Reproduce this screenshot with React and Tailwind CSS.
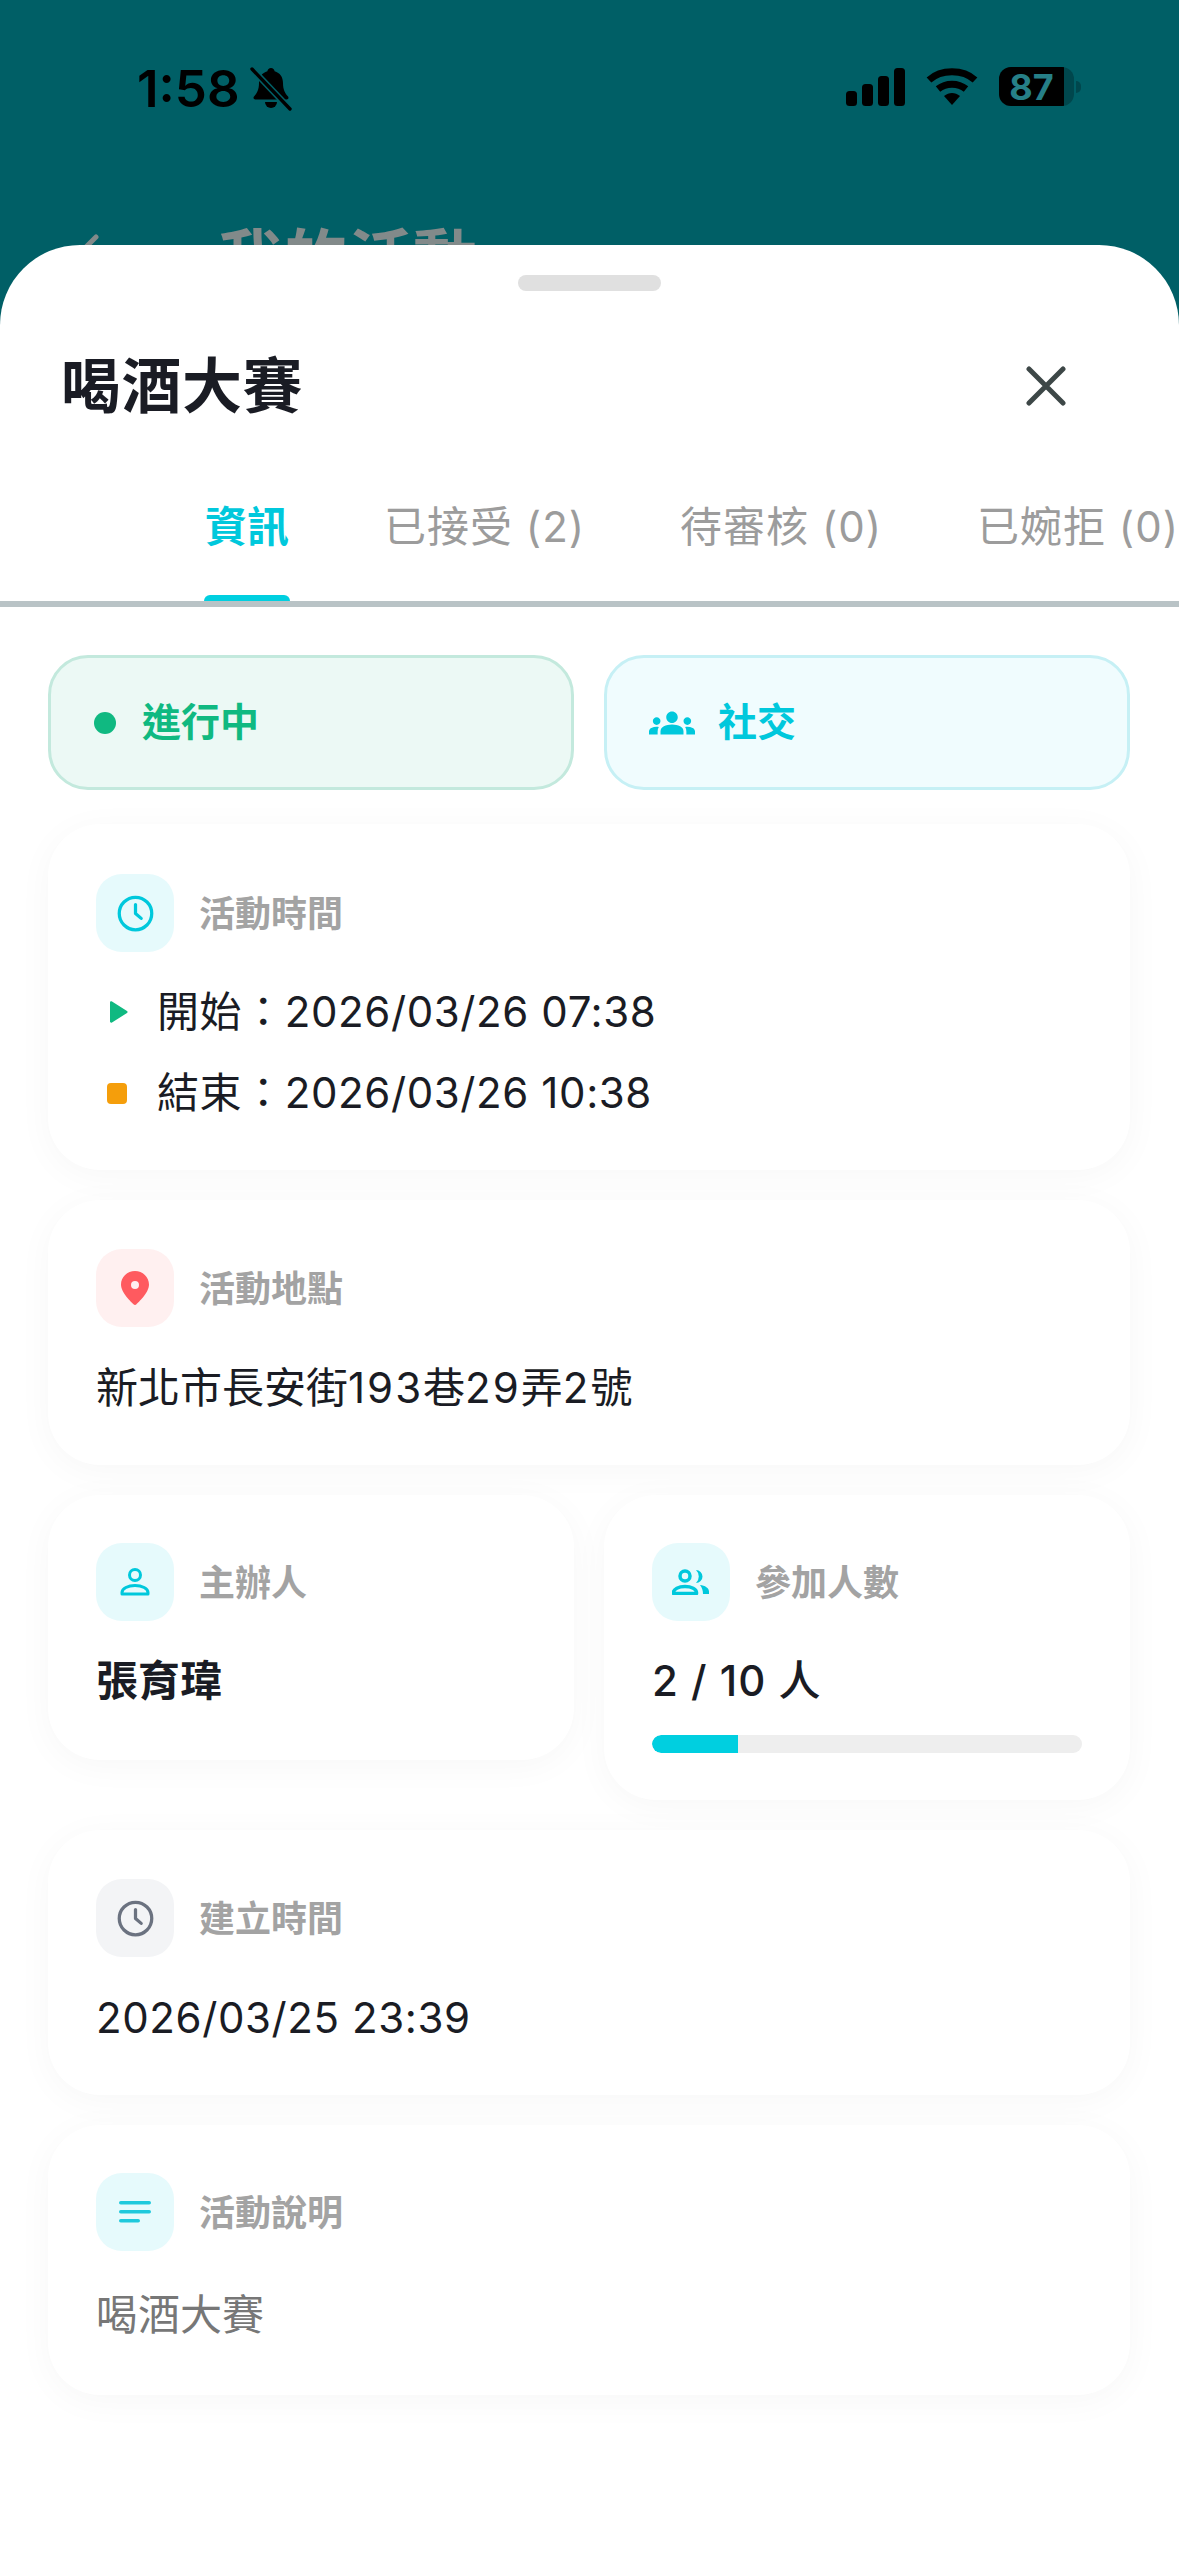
import React from "react";

const FONT = "font-['Inter','Noto_Sans_CJK_TC',sans-serif]";

function Clock({ color, size = 39 }) {
  return (
    <svg width={size} height={size} viewBox="0 0 24 24" fill="none" stroke={color} strokeWidth="2" strokeLinecap="round" strokeLinejoin="round">
      <circle cx="12" cy="12" r="10" />
      <path d="M12 6.500V12l3.500 3" />
    </svg>
  );
}

function IconBox({ bg, children }) {
  return (
    <div className={`w-[78px] h-[78px] rounded-[26px] flex items-center justify-center shrink-0 ${bg}`}>{children}</div>
  );
}

function CardHead({ bg, icon, label }) {
  return (
    <div className="flex items-center gap-[25px]">
      <IconBox bg={bg}>{icon}</IconBox>
      <span className="pt-[2px] text-[36px] leading-[50px] font-semibold text-[#a3a3a3]">{label}</span>
    </div>
  );
}

function Card({ className = "", children }) {
  return (
    <div className={`bg-white rounded-[52px] px-[48px] shadow-[0_6px_36px_rgba(0,0,0,0.035)] ${className}`}>{children}</div>
  );
}

export default function App() {
  return (
    <div className={`w-[1179px] h-[2556px] overflow-hidden flex flex-col bg-[#005f66] ${FONT}`}>
      <div className="h-[245px] shrink-0 overflow-hidden relative">
        <div className="flex justify-between items-start pt-[67px] pl-[137px] pr-[98px]">
          <div className="flex items-center gap-[10px]">
            <span className="text-[51px] leading-[40px] font-semibold text-black">1:58</span>
            <svg width="42" height="44" viewBox="0 0 42 44" fill="black">
              <path d="M21 1c-2 0-3.400 1.400-3.600 3.200C12 5.700 9 10 9 16c0 6.500-2 10.500-5 13.500-1 1.200-.4 3 1.500 3h31c1.900 0 2.500-1.800 1.500-3-3-3-5-7-5-13.500 0-6-3-10.300-8.400-11.800C24.400 2.400 23 1 21 1z" />
              <path d="M15 35h12a6 6 0 0 1-12 0z" />
              <path d="M1 1l39 41" stroke="#005f66" strokeWidth="6.500" />
              <path d="M2 2l38 40" stroke="black" strokeWidth="3.400" strokeLinecap="round" />
            </svg>
          </div>
          <div className="flex items-center">
            <svg width="59" height="38" viewBox="0 0 59 38" fill="black" className="mr-[21px]">
              <rect x="0" y="23" width="11" height="15" rx="3.500" />
              <rect x="16" y="16" width="11" height="22" rx="3.500" />
              <rect x="32" y="8" width="11" height="30" rx="3.500" />
              <rect x="48" y="0" width="11" height="38" rx="3.500" />
            </svg>
            <svg width="52" height="38" viewBox="0 0 52 38" fill="none" stroke="black" className="mr-[21px]">
              <path d="M3 12C15 1 37 1 49 12" strokeWidth="7" />
              <path d="M12 21c8-6.500 20-6.500 28 0" strokeWidth="7" />
              <path d="M18 28c5-4 11-4 16 0l-8 9z" fill="black" stroke="none" />
            </svg>
            <div className="relative w-[75px] h-[39px] rounded-[12px] bg-[#00474d] overflow-hidden flex">
              <div className="w-[65px] h-full bg-black flex items-center justify-center text-[36px] leading-none font-bold text-[#267f87]">87</div>
            </div>
            <div className="w-[5px] h-[12px] ml-[2px] rounded-r-full bg-[#00474d]" />
          </div>
        </div>
        <div className="absolute left-[74px] top-[233px] flex items-start gap-[118px] text-[#828a8a]">
          <svg width="26" height="44" viewBox="0 0 26 44" fill="none" stroke="currentColor" strokeWidth="5" strokeLinecap="round"><path d="M22 4L4 22l18 18" /></svg>
          <span className="text-[65px] leading-[64px] font-bold -mt-[5px]">我的活動</span>
        </div>
      </div>

      <div className="flex-1 bg-white rounded-t-[80px] flex flex-col relative">
        <div className="w-[143px] h-[16px] rounded-full bg-[#e0e0e0] self-center mt-[30px]" />
        <div className="flex items-center justify-between mt-[65px] pl-[61px] pr-[113px]">
          <span className="text-[60px] leading-[60px] font-bold text-[#1a1c24] tracking-[0.5px]">喝酒大賽</span>
          <svg width="40" height="40" viewBox="0 0 40 40" fill="none" stroke="#3d4747" strokeWidth="5" strokeLinecap="round"><path d="M3 3l34 34M37 3L3 37" /></svg>
        </div>
        <div className="mt-[86px] pl-[205px] flex gap-[95px] border-b-[6px] border-[#b9c3c6] whitespace-nowrap overflow-hidden">
          <div className="relative pb-[49px] shrink-0 text-[42px] leading-[50px] font-semibold text-[#00c8dc]">
            資訊
            <div className="absolute left-[-1px] right-[-1px] bottom-0 h-[6px] rounded-t-[10px] bg-[#00cfe0]" />
          </div>
          <div className="pb-[49px] shrink-0 text-[42px] leading-[50px] text-[#9c9c9c] tracking-[1px]">已接受 (2)</div>
          <div className="pb-[49px] shrink-0 text-[42px] leading-[50px] text-[#9c9c9c] tracking-[1px]">待審核 (0)</div>
          <div className="pb-[49px] shrink-0 text-[42px] leading-[50px] text-[#9c9c9c] tracking-[1px]">已婉拒 (0)</div>
        </div>

        <div className="pl-[48px] pr-[49px] pt-[48px] flex flex-col gap-[30px]">
          <div className="grid grid-cols-2 gap-[30px] mb-[4px]">
            <div className="h-[135px] rounded-[40px] border-[3px] border-[#c3e9dd] bg-[#ecf9f5] flex items-center pl-[43px] gap-[26px]">
              <div className="w-[22px] h-[22px] rounded-full bg-[#10b981]" />
              <span className="text-[39px] font-semibold text-[#10b981]">進行中</span>
            </div>
            <div className="h-[135px] rounded-[40px] border-[3px] border-[#c6f0f5] bg-[#f0fcfe] flex items-center pl-[42px] gap-[23px]">
              <svg width="46" height="46" viewBox="0 0 24 24" fill="#00c8dc"><path d="M12 12.750c1.630 0 3.070.39 4.240.9 1.080.48 1.760 1.560 1.760 2.730V18H6v-1.610c0-1.180.68-2.260 1.760-2.730 1.170-.52 2.610-.91 4.240-.91zM4 13c1.100 0 2-.9 2-2s-.9-2-2-2-2 .9-2 2 .9 2 2 2zm1.130 1.100c-.37-.06-.74-.1-1.130-.1-.99 0-1.930.21-2.780.58C.48 14.900 0 15.620 0 16.430V18h4.500v-1.610c0-.83.23-1.610.63-2.290zM20 13c1.100 0 2-.9 2-2s-.9-2-2-2-2 .9-2 2 .9 2 2 2zm4 3.430c0-.81-.48-1.530-1.220-1.850-.85-.37-1.790-.58-2.780-.58-.39 0-.76.04-1.130.1.4.68.63 1.460.63 2.290V18H24v-1.570zM12 6c1.660 0 3 1.340 3 3s-1.340 3-3 3-3-1.340-3-3 1.340-3 3-3z" /></svg>
              <span className="text-[39px] font-semibold text-[#00c8dc]">社交</span>
            </div>
          </div>

          <Card className="h-[346px] pt-[50px]">
            <CardHead bg="bg-[#e6fafc]" label="活動時間" icon={<Clock color="#00c8dc" />} />
            <div className="mt-[29px] flex flex-col gap-[19px] text-[42px] leading-[62px] text-[#1a1c24] tracking-[0.6px]">
              <div className="flex items-center">
                <div className="w-[61px] pl-[14px]">
                  <svg width="18" height="22" viewBox="0 0 18 22" fill="#10b981"><path d="M0 1.500v19c0 1 1 1.500 2 1L17 12c.8-.5.8-1.500 0-2L2 .500C1 0 0 .500 0 1.500z" /></svg>
                </div>
                <span>開始：2026/03/26 07:38</span>
              </div>
              <div className="flex items-center">
                <div className="w-[61px] pl-[11px]">
                  <div className="w-[20px] h-[21px] rounded-[4px] bg-[#f59e0b]" />
                </div>
                <span>結束：2026/03/26 10:38</span>
              </div>
            </div>
          </Card>

          <Card className="pt-[49px] pb-[46px]">
            <CardHead bg="bg-[#fff0f0]" label="活動地點" icon={
              <svg width="28" height="34" viewBox="0 0 28 34" fill="#ff5a5f" fillRule="evenodd"><path d="M14 0C6.300 0 0 6 0 13.500 0 22 11 31.500 12.500 33.300c.8.9 2.200.9 3 0C17 31.500 28 22 28 13.500 28 6 21.700 0 14 0zm0 18a4 4 0 1 1 0-8 4 4 0 0 1 0 8z" /></svg>
            } />
            <div className="mt-[30px] text-[42px] leading-[62px] text-[#1a1c24]">
              新北市長安街<span className="tracking-[2px]">193</span>巷<span className="tracking-[2px]">29</span>弄<span className="tracking-[2px]">2</span>號
            </div>
          </Card>

          <div className="grid grid-cols-2 gap-[30px] items-start">
            <Card className="pt-[48px] pb-[48px]">
              <CardHead bg="bg-[#e6fafc]" label="主辦人" icon={
                <svg width="30" height="28" viewBox="0 0 30 28" fill="none" stroke="#00c8dc" strokeWidth="3" strokeLinejoin="round"><circle cx="15" cy="7" r="5.500" /><path d="M2 26v-1.500c0-4 6-7 13-7s13 3 13 7V26z" /></svg>
              } />
              <div className="mt-[29px] text-[42px] leading-[62px] font-bold text-[#1a1c24]">張育瑋</div>
            </Card>
            <Card className="pt-[48px] pb-[47px]">
              <CardHead bg="bg-[#e6fafc]" label="參加人數" icon={
                <svg width="38" height="26" viewBox="0 0 38 26" fill="none" stroke="#00c8dc" strokeWidth="3.500" strokeLinejoin="round">
                  <circle cx="13" cy="7" r="5" />
                  <path d="M24 1a6.500 6.500 0 0 1 0 13 9 9 0 0 0 0-13z" fill="#00c8dc" stroke="none" />
                  <path d="M1.500 24.500v-1c0-3.500 5-6 11.500-6s11.500 2.500 11.500 6v1z" />
                  <path d="M28 16c5 .5 9 3 9 6.500V25h-6c0-3.500-1-6.500-3-9z" fill="#00c8dc" stroke="none" />
                </svg>
              } />
              <div className="mt-[29px] text-[42px] leading-[62px] font-medium text-[#1a1c24] tracking-[1px]">2 / 10 人</div>
              <div className="mt-[23px] h-[18px] rounded-full bg-[#eeeeee] overflow-hidden">
                <div className="h-full bg-[#00cfe0] rounded-l-full" style={{ width: "20%" }} />
              </div>
            </Card>
          </div>

          <Card className="pt-[49px] pb-[46px]">
            <CardHead bg="bg-[#f3f4f6]" label="建立時間" icon={<Clock color="#6b7280" />} />
            <div className="mt-[30px] text-[42px] leading-[62px] text-[#1a1c24] tracking-[0.6px]">2026/03/25 23:39</div>
          </Card>

          <Card className="pt-[48px] pb-[46px]">
            <CardHead bg="bg-[#e6fafc]" label="活動說明" icon={
              <svg width="32" height="22" viewBox="0 0 32 22" fill="#1fc9dc"><rect x="0" y="0" width="32" height="3.500" rx="1.750" /><rect x="0" y="9" width="32" height="3.500" rx="1.750" /><rect x="0" y="18" width="21" height="3.500" rx="1.750" /></svg>
            } />
            <div className="mt-[30px] text-[42px] leading-[68px] text-[#777777]">喝酒大賽</div>
          </Card>
        </div>
      </div>
    </div>
  );
}
